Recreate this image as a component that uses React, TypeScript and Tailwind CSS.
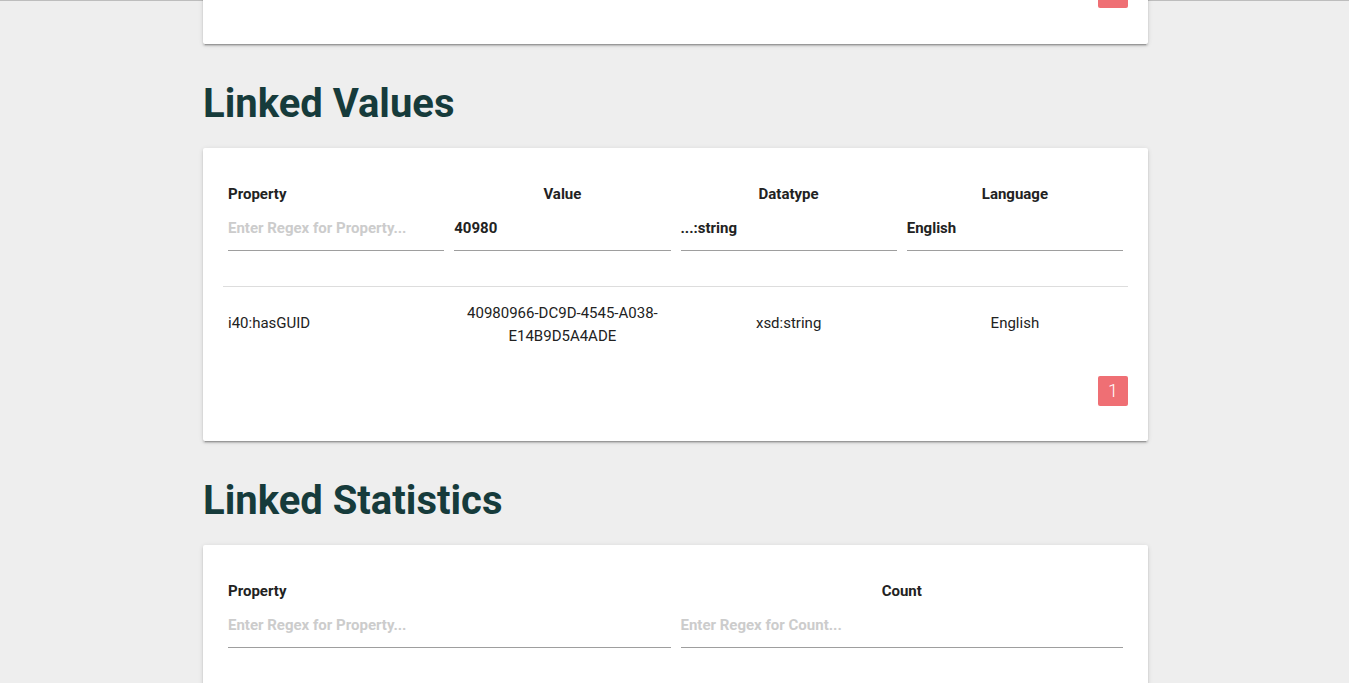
import * as React from 'react'

const cn = (...tokens: Array<string | false | null | undefined>) =>
    tokens.filter(Boolean).join(' ')

/* ------------------------------------------------------------------ */
/*  Pieces                                                             */
/* ------------------------------------------------------------------ */

const CARD =
    'bg-white rounded-[2px] shadow-[0_2px_2px_0_rgba(0,0,0,0.14),0_3px_1px_-2px_rgba(0,0,0,0.2),0_1px_5px_0_rgba(0,0,0,0.12)]'

interface Column {
    label: string
    placeholder: string
    value?: string
}

const PageButton = () => (
    <button className="h-[30px] w-[30px] rounded-[2px] bg-[#ef6f74] text-[18px] font-light leading-[30px] text-white">
        1
    </button>
)

const FilterHeader = ({ columns }: { columns: Column[] }) => (
    <div className="flex border-b border-[#dddddd]">
        {columns.map((col, i) => (
            <div key={col.label} className="flex-1 px-[5px] pt-4 pb-[35px]">
                <div
                    className={cn(
                        'h-5 text-[15px] font-bold leading-5 text-[#222]',
                        i === 0 ? 'text-left' : 'text-center'
                    )}
                >
                    {col.label}
                </div>
                <div className="mt-[14px] border-b border-[#9e9e9e] pb-[12px] text-[15px] font-bold leading-5">
                    {col.value ? (
                        <span className="text-[#222]">{col.value}</span>
                    ) : (
                        <span className="text-[#cccccc]">{col.placeholder}</span>
                    )}
                </div>
            </div>
        ))}
    </div>
)

const Heading = ({ children }: { children: React.ReactNode }) => (
    <h2 className="mt-9 mb-5 text-[40px] font-bold leading-[48px] text-[#163b3b]">{children}</h2>
)

/* ------------------------------------------------------------------ */
/*  Page                                                               */
/* ------------------------------------------------------------------ */

const valueCols: Column[] = [
    { label: 'Property', placeholder: 'Enter Regex for Property...' },
    { label: 'Value', placeholder: 'Enter Regex for Value...', value: '40980' },
    { label: 'Datatype', placeholder: 'Enter Regex for Datatype...', value: '...:string' },
    { label: 'Language', placeholder: 'Enter Regex for Language...', value: 'English' },
]

const statCols: Column[] = [
    { label: 'Property', placeholder: 'Enter Regex for Property...' },
    { label: 'Count', placeholder: 'Enter Regex for Count...' },
]

export default function App() {
    return (
        <div
            className="min-h-screen overflow-hidden bg-[#eeeeee] text-[#222]"
            style={{ fontFamily: 'Roboto, "Noto Sans", sans-serif' }}
        >
            <div className="h-px bg-[#bdbdbd]" />
            <div className="ml-[203px] w-[945px]">
                {/* previous card, scrolled mostly out of view */}
                <div className={cn(CARD, '-mt-[21px] flex h-[64px] items-end justify-end px-5 pb-[36px]')}>
                    <PageButton />
                </div>

                <Heading>Linked Values</Heading>
                <div className={cn(CARD, 'px-5 pt-5 pb-[35px]')}>
                    <FilterHeader columns={valueCols} />
                    <div className="flex items-center text-[15px] leading-[23px] text-[#222]">
                        <div className="flex-1 px-[5px] text-left">i40:hasGUID</div>
                        <div className="flex-1 px-[5px] pt-[15px] pb-[12px] text-center">
                            40980966-DC9D-4545-A038-
                            <br />
                            E14B9D5A4ADE
                        </div>
                        <div className="flex-1 px-[5px] text-center">xsd:string</div>
                        <div className="flex-1 px-[5px] text-center">English</div>
                    </div>
                    <div className="mt-4 flex justify-end">
                        <PageButton />
                    </div>
                </div>

                <Heading>Linked Statistics</Heading>
                <div className={cn(CARD, 'p-5 pb-16')}>
                    <FilterHeader columns={statCols} />
                </div>
            </div>
        </div>
    )
}
